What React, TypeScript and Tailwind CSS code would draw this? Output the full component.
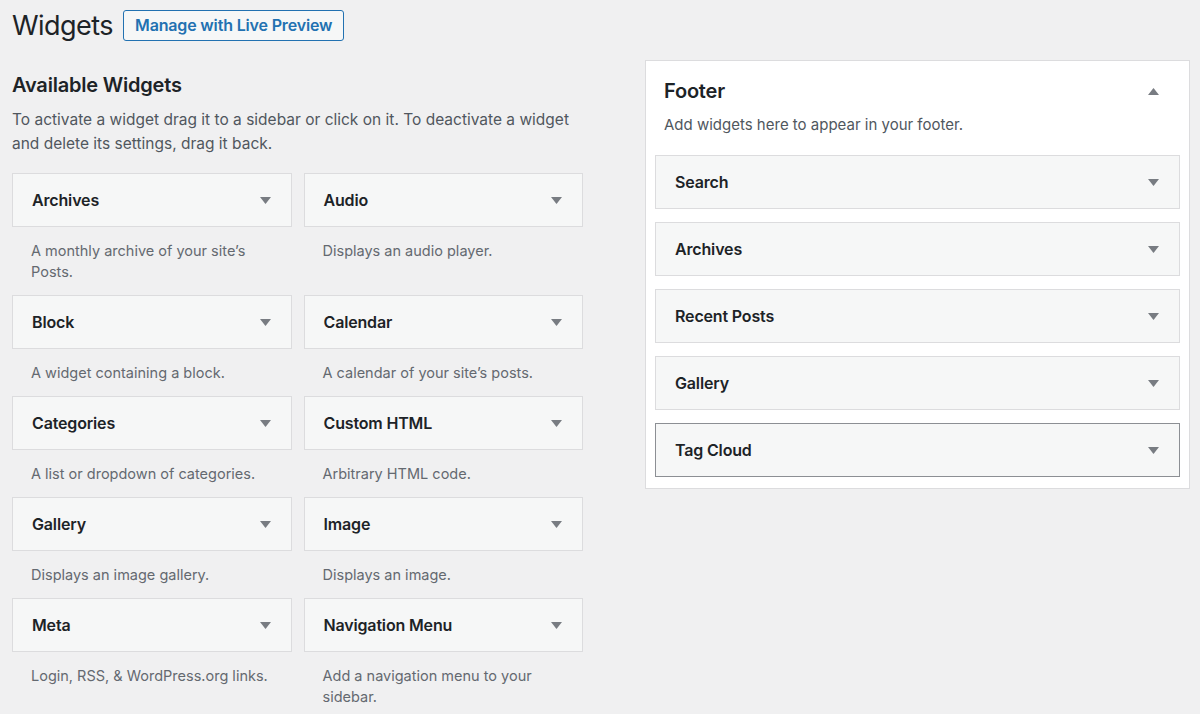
import React from "react";

const font = { fontFamily: "Inter, 'Noto Sans', sans-serif" };

function Arrow({ up = false }: { up?: boolean }) {
  return (
    <svg width="11" height="7" viewBox="0 0 11 7" className="shrink-0">
      {up ? (
        <polygon points="0,7 11,7 5.5,0" fill="#787c82" />
      ) : (
        <polygon points="0,0 11,0 5.5,7" fill="#787c82" />
      )}
    </svg>
  );
}

function WidgetHeader({ title, dark = false }: { title: string; dark?: boolean }) {
  return (
    <div
      className={`flex h-[54px] items-center justify-between border bg-[#f6f7f7] pl-[19px] pr-[20px] ${
        dark ? "border-[#8c8f94]" : "border-[#dcdcde]"
      }`}
    >
      <span className="text-[16px] font-semibold tracking-[-0.01em] text-[#1d2327]">{title}</span>
      <Arrow />
    </div>
  );
}

const available: { title: string; desc: string }[] = [
  { title: "Archives", desc: "A monthly archive of your site’s Posts." },
  { title: "Audio", desc: "Displays an audio player." },
  { title: "Block", desc: "A widget containing a block." },
  { title: "Calendar", desc: "A calendar of your site’s posts." },
  { title: "Categories", desc: "A list or dropdown of categories." },
  { title: "Custom HTML", desc: "Arbitrary HTML code." },
  { title: "Gallery", desc: "Displays an image gallery." },
  { title: "Image", desc: "Displays an image." },
  { title: "Meta", desc: "Login, RSS, & WordPress.org links." },
  { title: "Navigation Menu", desc: "Add a navigation menu to your sidebar." },
];

const footerWidgets = ["Search", "Archives", "Recent Posts", "Gallery", "Tag Cloud"];

export default function App() {
  return (
    <div className="min-h-[714px] w-[1200px] overflow-hidden bg-[#f0f0f1] text-[#1d2327]" style={font}>
      <div className="flex items-center gap-[10px] pl-[12px] pt-[10px]">
        <h1 className="text-[27px] font-normal leading-[31px] tracking-[-0.02em] text-[#1d2327]">Widgets</h1>
        <button className="h-[31px] rounded-[3px] border border-[#2271b1] bg-[#f6f7f7] px-[11px] text-[16px] font-semibold leading-[29px] tracking-[-0.01em] text-[#2271b1]">
          Manage with Live Preview
        </button>
      </div>
      <div className="flex items-start">
        <div className="ml-[12px] w-[571px]">
          <h2 className="mt-[31px] text-[20px] font-semibold leading-[26px] tracking-[-0.01em] text-[#1d2327]">
            Available Widgets
          </h2>
          <p className="mt-[10px] text-[15.5px] leading-[24px] text-[#50575e]">
            To activate a widget drag it to a sidebar or click on it. To deactivate a widget and delete its settings, drag it back.
          </p>
          <div className="mt-[17px] grid grid-cols-2 gap-x-[12px]">
            {available.map((w) => (
              <div key={w.title}>
                <WidgetHeader title={w.title} />
                <p className="mb-[13px] mt-[13px] pl-[19px] pr-[8px] text-[14.5px] leading-[21px] text-[#646970]">
                  {w.title === "Archives" ? (
                    <>
                      A monthly archive of your site’s
                      <br />
                      Posts.
                    </>
                  ) : w.title === "Navigation Menu" ? (
                    <>
                      Add a navigation menu to your
                      <br />
                      sidebar.
                    </>
                  ) : (
                    w.desc
                  )}
                </p>
              </div>
            ))}
          </div>
        </div>
        <div className="ml-[62px] mt-[19px] w-[545px] border border-[#dcdcde] bg-white px-[9px] pb-[11px]">
          <div className="flex items-center justify-between pl-[9px] pr-[21px] pt-[17px]">
            <h3 className="text-[20px] font-semibold leading-[26px] tracking-[-0.01em] text-[#1d2327]">Footer</h3>
            <Arrow up />
          </div>
          <p className="mt-[11px] pl-[9px] text-[15px] leading-[20px] text-[#50575e]">
            Add widgets here to appear in your footer.
          </p>
          <div className="mt-[20px] flex flex-col gap-[13px]">
            {footerWidgets.map((t) => (
              <WidgetHeader key={t} title={t} dark={t === "Tag Cloud"} />
            ))}
          </div>
        </div>
      </div>
    </div>
  );
}
